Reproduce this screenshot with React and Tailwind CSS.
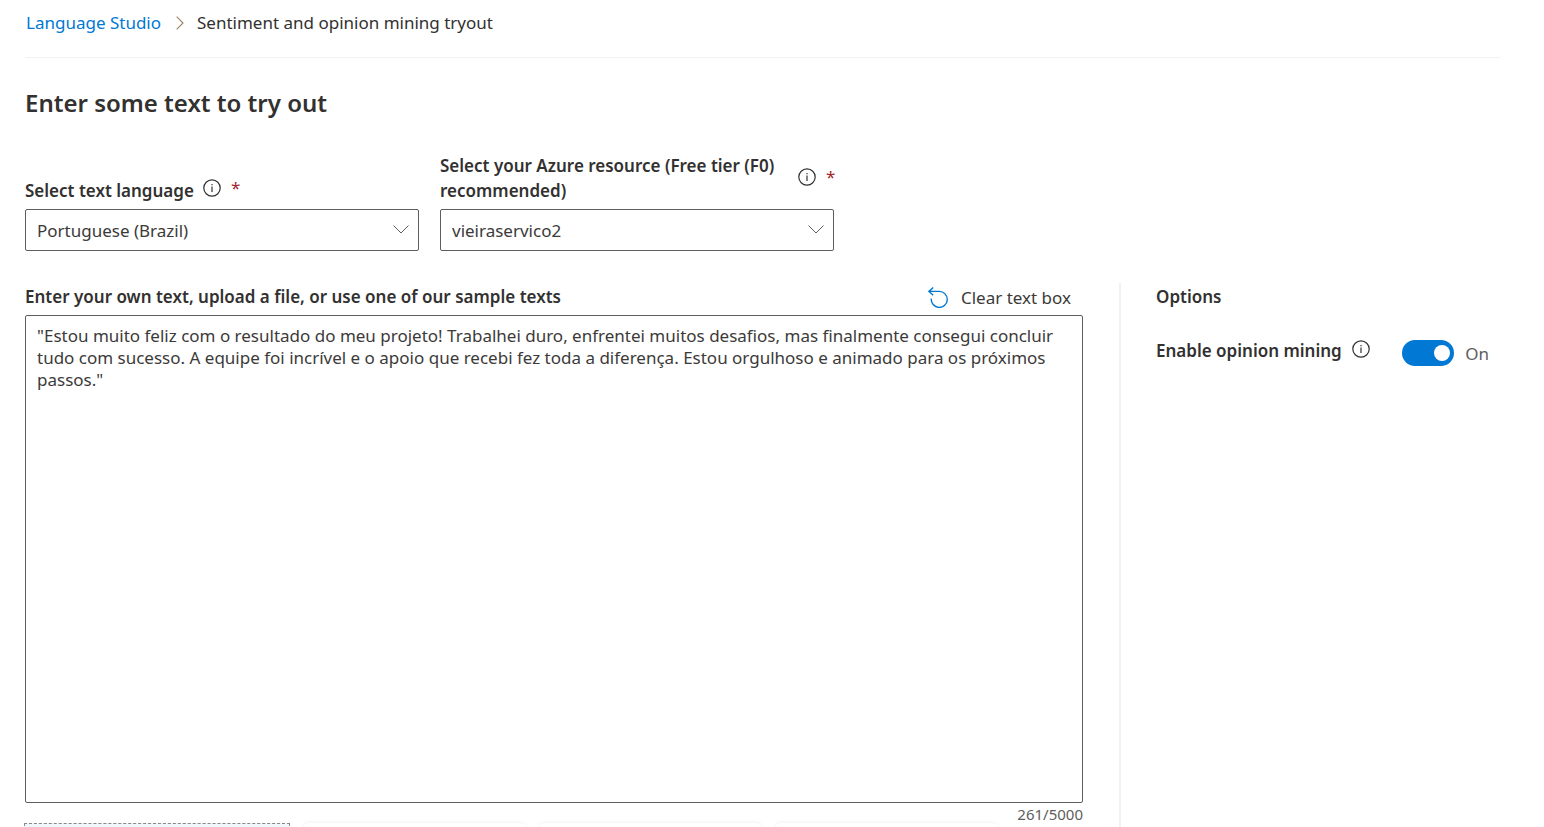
import { useState } from "react";

const SAMPLE =
  '"Estou muito feliz com o resultado do meu projeto! Trabalhei duro, enfrentei muitos desafios, mas finalmente consegui concluir tudo com sucesso. A equipe foi incrível e o apoio que recebi fez toda a diferença. Estou orgulhoso e animado para os próximos passos."';

function InfoIcon() {
  return (
    <svg viewBox="0 0 18 18" className="size-[18px] shrink-0" fill="none" stroke="#323130" aria-hidden="true">
      <circle cx="9" cy="9" r="8.2" strokeWidth="1.2" />
      <path d="M9 7.5V13" strokeWidth="1.2" />
      <path d="M9 5V6.2" strokeWidth="1.2" />
    </svg>
  );
}

function Select({ id, options }) {
  return (
    <div className="relative">
      <select
        id={id}
        className="block h-[42px] w-full appearance-none rounded-xs border border-[#605e5c] bg-white pr-10 pl-[11px] text-[17px] text-[#3b3a39]"
      >
        {options.map((option) => (
          <option key={option}>{option}</option>
        ))}
      </select>
      <svg
        viewBox="0 0 16 9"
        className="pointer-events-none absolute top-4 right-[10px] h-[9px] w-4"
        fill="none"
        stroke="#605e5c"
        aria-hidden="true"
      >
        <path d="M.5.5 8 8 15.5.5" />
      </svg>
    </div>
  );
}

export default function App() {
  const [text, setText] = useState(SAMPLE);
  const [mining, setMining] = useState(true);

  return (
    <div className="h-screen overflow-hidden bg-white pr-11 pl-[25px] font-['Noto_Sans','Open_Sans',sans-serif] text-[17px] leading-[25px] text-[#323130]">
      <header className="border-b border-[#f3f2f1] pt-[10px] pb-[22px]">
        <nav aria-label="Breadcrumb" className="flex items-center pl-px">
          <a href="#studio" className="text-[#0078d4]">Language Studio</a>
          <svg viewBox="0 0 8 14" className="mr-[13px] ml-[15px] h-[14px] w-2" fill="none" stroke="#a08060" aria-hidden="true">
            <path d="M.7.7 7 7 .7 13.3" strokeWidth="1.1" />
          </svg>
          <span>Sentiment and opinion mining tryout</span>
        </nav>
      </header>

      <main>
        <h1 className="pt-[29px] text-2xl font-semibold">Enter some text to try out</h1>

        <div className="mt-[34px] flex items-end gap-[21px]">
          <div className="w-[394px]">
            <div className="mb-[6px] flex items-start">
              <label htmlFor="language" className="mr-[9px] font-semibold">Select text language</label>
              <div className="flex items-center gap-[10px] leading-5">
                <InfoIcon />
                <span className="text-[#a4262c]">*</span>
              </div>
            </div>
            <Select id="language" options={["Portuguese (Brazil)", "English", "Spanish"]} />
          </div>
          <div className="w-[394px]">
            <div className="mb-[6px] flex items-center">
              <label htmlFor="resource" className="w-[358px] shrink-0 font-semibold">
                Select your Azure resource (Free tier (F0) recommended)
              </label>
              <div className="flex items-center gap-[10px] pb-[2px] leading-5">
                <InfoIcon />
                <span className="text-[#a4262c]">*</span>
              </div>
            </div>
            <Select id="resource" options={["vieiraservico2"]} />
          </div>
        </div>

        <div className="mt-8 flex">
          <section className="min-w-0 flex-1">
            <div className="flex h-8 items-start justify-between pr-3">
              <label htmlFor="text" className="pt-px font-semibold">
                Enter your own text, upload a file, or use one of our sample texts
              </label>
              <button type="button" onClick={() => setText("")} className="flex items-center gap-3 pt-[2px] text-[#3b3a39]">
                <svg viewBox="0 0 21 21" className="size-[21px]" fill="none" stroke="#0078d4" strokeWidth="1.4" aria-hidden="true">
                  <path d="M5.2.6 1 4.4l4.2 3.8M1.2 4.4h10.1a8 8 0 1 1-8 7.2" />
                </svg>
                Clear text box
              </button>
            </div>
            <textarea
              id="text"
              value={text}
              maxLength={5000}
              onChange={(e) => setText(e.target.value)}
              className="block h-[488px] w-full resize-none rounded-xs border border-[#605e5c] px-[11px] py-[9px] leading-[22px] text-[#3b3a39]"
            />
            <p className="h-5 text-right text-[15px] leading-[22px] text-[#605e5c]">{text.length}/5000</p>
            <div className="-ml-px flex gap-[13px]">
              <div className="h-24 w-[266px] border border-dashed border-[#8a8886] bg-[#eff6fc]" />
              <div className="h-24 w-[223px] rounded-md shadow-[0_0_4px_rgba(0,0,0,0.08)]" />
              <div className="h-24 w-[223px] rounded-md shadow-[0_0_4px_rgba(0,0,0,0.08)]" />
              <div className="h-24 w-[223px] rounded-md shadow-[0_0_4px_rgba(0,0,0,0.08)]" />
            </div>
          </section>

          <aside className="ml-9 w-[381px] border-l-2 border-[#f3f2f1] pl-[35px]">
            <h2 className="pt-px font-semibold">Options</h2>
            <div className="mt-[29px] flex items-start">
              <label htmlFor="mining" className="mr-[10px] font-semibold">Enable opinion mining</label>
              <div className="pt-[2px]">
                <InfoIcon />
              </div>
              <div className="mr-[11px] ml-auto flex items-center gap-[11px] pt-[2px] text-[#605e5c]">
                <input
                  id="mining"
                  type="checkbox"
                  role="switch"
                  checked={mining}
                  onChange={(e) => setMining(e.target.checked)}
                  className="flex h-[26px] w-[52px] appearance-none items-center rounded-full bg-[#8a8886] px-1 before:size-4 before:rounded-full before:bg-white checked:justify-end checked:bg-[#0078d4]"
                />
                <span>{mining ? "On" : "Off"}</span>
              </div>
            </div>
          </aside>
        </div>
      </main>
    </div>
  );
}
